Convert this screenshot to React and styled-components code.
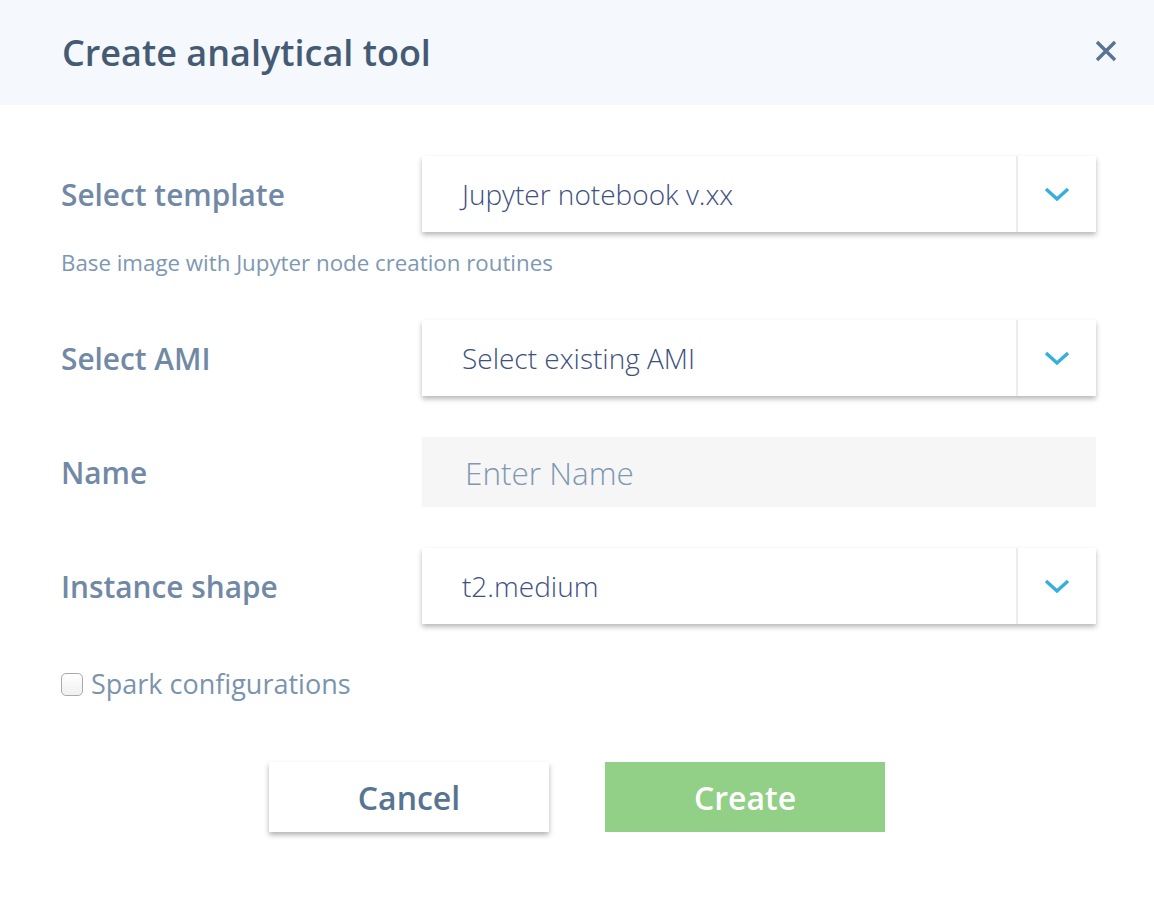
import React from "react";
import styled, { createGlobalStyle } from "styled-components";

const Global = createGlobalStyle`
  html, body { margin: 0; padding: 0; background: #fff; }
  body { font-family: "Open Sans", "Noto Sans", sans-serif; }
  * { box-sizing: border-box; }
`;

const Dialog = styled.div`
  width: 1154px;
  min-height: 900px;
  background: #fff;
  display: flex;
  flex-direction: column;
`;

const Header = styled.header`
  height: 105px;
  background: #f5f8fd;
  display: flex;
  align-items: center;
  justify-content: space-between;
  padding: 0 33px 0 62px;
`;

const Title = styled.h1`
  margin: 0;
  font-size: 36px;
  font-weight: 600;
  color: #455b73;
  letter-spacing: 0;
`;

const CloseButton = styled.button`
  width: 30px;
  height: 30px;
  border: 0;
  background: none;
  padding: 0;
  display: flex;
  align-items: center;
  justify-content: center;
  cursor: pointer;
  margin-top: -3px;
`;

const Body = styled.div`
  display: flex;
  flex-direction: column;
  padding: 0 58px 0 61px;
`;

const Row = styled.div`
  display: flex;
  align-items: center;
  margin-top: ${(p) => p.$mt}px;
`;

const Label = styled.label`
  width: 361px;
  flex: none;
  font-size: 29.8px;
  font-weight: 600;
  color: #7189a5;
`;

const SelectBox = styled.div`
  width: 674px;
  height: 76px;
  background: #fff;
  box-shadow: 0 3px 5px rgba(0, 0, 0, 0.28);
  display: flex;
  align-items: stretch;
`;

const SelectValue = styled.div`
  flex: 1;
  display: flex;
  align-items: center;
  padding-left: 40px;
  font-size: 28px;
  font-weight: 300;
  color: #3e5081;
`;

const SelectArrow = styled.div`
  width: 80px;
  border-left: 2px solid #ececec;
  display: flex;
  align-items: center;
  justify-content: center;
`;

const Hint = styled.div`
  margin-top: 17px;
  font-size: 22.3px;
  line-height: 28px;
  color: #7e98b2;
`;

const TextInput = styled.input`
  width: 674px;
  height: 70px;
  border: 0;
  outline: none;
  background: #f6f6f6;
  padding: 0 0 0 43px;
  font-family: inherit;
  font-size: 31.5px;
  font-weight: 300;
  color: #3e5081;
  &::placeholder { color: #7e97b2; }
`;

const CheckRow = styled.label`
  display: flex;
  align-items: center;
  margin-top: 44px;
  height: 30px;
  font-size: 27px;
  color: #7a93ae;
`;

const CheckBox = styled.span`
  width: 22px;
  height: 23px;
  border: 1px solid #aaa;
  border-radius: 5px;
  background: linear-gradient(#fff, #f0f0f0);
  margin-right: 8px;
  margin-top: 2px;
  flex: none;
`;

const Actions = styled.div`
  display: flex;
  justify-content: center;
  gap: 56px;
  margin-top: 64px;
  margin-left: -61px;
  margin-right: -58px;
`;

const Button = styled.button`
  width: 280px;
  height: 70px;
  border: 0;
  font-family: inherit;
  font-size: 32px;
  font-weight: 600;
  cursor: pointer;
  background: ${(p) => (p.$primary ? "#92d087" : "#fff")};
  color: ${(p) => (p.$primary ? "#fff" : "#577590")};
  box-shadow: ${(p) => (p.$primary ? "none" : "0 3px 5px rgba(0,0,0,0.3)")};
`;

const Chevron = () => (
  <svg width="26" height="16" viewBox="0 0 26 16">
    <path d="M2 3 L13 13 L24 3" fill="none" stroke="#36afdc" strokeWidth="3.4" />
  </svg>
);

const Select = ({ value }) => (
  <SelectBox>
    <SelectValue>{value}</SelectValue>
    <SelectArrow>
      <Chevron />
    </SelectArrow>
  </SelectBox>
);

export default function App() {
  return (
    <>
      <Global />
      <Dialog>
        <Header>
          <Title>Create analytical tool</Title>
          <CloseButton aria-label="close">
            <svg width="22" height="22" viewBox="0 0 22 22">
              <path d="M2 2 L20 20 M20 2 L2 20" stroke="#577590" strokeWidth="3.4" />
            </svg>
          </CloseButton>
        </Header>
        <Body>
          <Row $mt={51}>
            <Label>Select template</Label>
            <Select value="Jupyter notebook v.xx" />
          </Row>
          <Hint>Base image with Jupyter node creation routines</Hint>
          <Row $mt={43}>
            <Label>Select AMI</Label>
            <Select value="Select existing AMI" />
          </Row>
          <Row $mt={41}>
            <Label>Name</Label>
            <TextInput placeholder="Enter Name" />
          </Row>
          <Row $mt={41}>
            <Label>Instance shape</Label>
            <Select value="t2.medium" />
          </Row>
          <CheckRow>
            <CheckBox />
            Spark configurations
          </CheckRow>
          <Actions>
            <Button>Cancel</Button>
            <Button $primary>Create</Button>
          </Actions>
        </Body>
      </Dialog>
    </>
  );
}
